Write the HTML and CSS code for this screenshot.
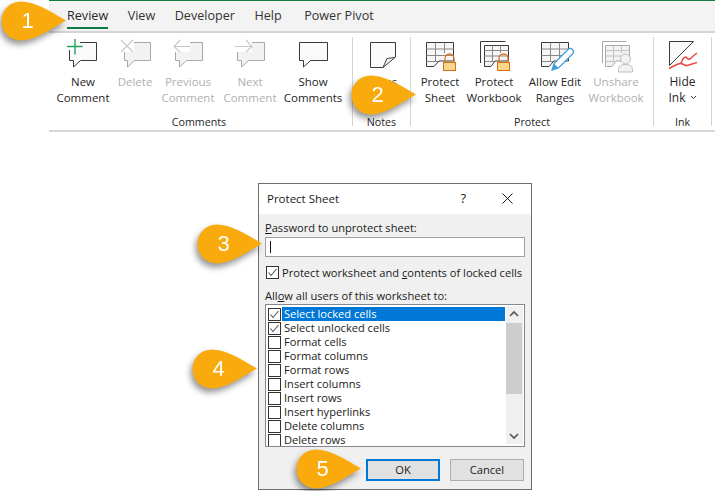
FILE: index.html
```html
<!DOCTYPE html>
<html lang="en">
<head>
<meta charset="utf-8">
<title>Protect Sheet</title>
<link rel="stylesheet" href="styles.css">
</head>
<body>
<header class="ribbon">
  <nav class="tabs">
    <span class="tab active">Review</span><span class="tab">View</span><span class="tab">Developer</span><span class="tab">Help</span><span class="tab">Power Pivot</span>
  </nav>
  <div class="groups">
    <section class="group g-comments">
      <div class="btns">
        <div class="btn w-new">
          <svg class="ico" viewBox="0 0 32 32"><path class="bub" d="M2.500 4.500H29.500V22.500H13.500L6.500 29V22.500H2.500Z"/><path class="cut" d="M0 0h13v12H0z"/><path class="plus" d="M0 8.500H15.500M8 1V16.500"/></svg>
          <span>New</span><span>Comment</span>
        </div>
        <div class="btn w-del off">
          <svg class="ico" viewBox="0 0 32 32"><path class="bub" d="M5.500 4.500H31.500V22.500H15.500L8.500 29V22.500H5.500Z"/><path class="cut" d="M0 0h15v14H0z"/><path class="gl" d="M2 2L14 14M14 2L2 14"/></svg>
          <span>Delete</span>
        </div>
        <div class="btn w-prev off">
          <svg class="ico" viewBox="0 0 32 32"><path class="bub" d="M3.500 4.500H30.500V22.500H14.500L7.500 29V22.500H3.500Z"/><path class="cut" d="M0 2h18v12H0z"/><path class="gl" d="M8 2L2 8.500L8 14M2 8.500H18"/></svg>
          <span>Previous</span><span>Comment</span>
        </div>
        <div class="btn w-next off">
          <svg class="ico" viewBox="0 0 32 32"><path class="bub" d="M3.500 4.500H30.500V22.500H14.500L7.500 29V22.500H3.500Z"/><path class="cut" d="M0 2h18v12H0z"/><path class="gl" d="M12 2L18 8.500L12 14M1 8.500H18"/></svg>
          <span>Next</span><span>Comment</span>
        </div>
        <div class="btn w-show">
          <svg class="ico" viewBox="0 0 32 32"><path class="bub" d="M2.500 4.500H30.500V22.500H13.500L6.500 29V22.500H2.500Z"/></svg>
          <span>Show</span><span>Comments</span>
        </div>
      </div>
      <div class="glabel glabel-comments">Comments</div>
    </section>
    <section class="group g-notes">
      <div class="btns">
        <div class="btn w-fill">
          <svg class="ico" viewBox="0 0 32 32"><path class="bub" d="M4.500 4.500H29.500V19L17 29.500H4.500Z"/><path class="ln" d="M29 19.500L21 20.500L17 29.500"/></svg>
          <span>Notes</span>
        </div>
      </div>
      <div class="glabel">Notes</div>
    </section>
    <section class="group g-protect">
      <div class="btns">
        <div class="btn w-sheet">
          <svg class="ico" viewBox="0 0 32 32"><path class="sheet" d="M2.500 4.500H29.500V23H15L10 28.500H2.500Z"/><path class="grid" d="M2.500 11H29.500M2.500 17.500H29.500M2.500 23.500H14M11.500 4.500V23M20.500 4.500V15"/><path class="shackle" d="M21 24V20.500a4.500 4.500 0 0 1 9 0V24"/><rect class="lock" x="19.500" y="24.500" width="12" height="8"/></svg>
          <span>Protect</span><span>Sheet</span>
        </div>
        <div class="btn w-book">
          <svg class="ico" viewBox="0 0 32 32"><path class="ln" d="M2.500 25V3.500H27.500"/><path class="sheet" d="M6.500 7.500H30.500V23H17L13 28.500H6.500Z"/><path class="grid" d="M6.500 12.500H30.500M6.500 18H30.500M6.500 23.500H16M14.500 7.500V23M22.500 7.500V15"/><path class="shackle" d="M21 24V20.500a4.500 4.500 0 0 1 9 0V24"/><rect class="lock" x="19.500" y="24.500" width="12" height="8"/></svg>
          <span>Protect</span><span>Workbook</span>
        </div>
        <div class="btn w-edit">
          <svg class="ico" viewBox="0 0 32 32"><path class="sheet" d="M2.500 4.500H29.500V23H15L10 28.500H2.500Z"/><path class="grid" d="M2.500 11H29.500M2.500 17.500H24M2.500 23.500H14M11.500 4.500V23M20.500 4.500V23"/><path class="pencil" d="M13 32L15 25.500L29 11.500a2.500 2.500 0 0 1 4.500 4.500L19.500 30Z"/><path class="nib" d="M13 32L15 25.500L19.500 30Z"/></svg>
          <span>Allow Edit</span><span>Ranges</span>
        </div>
        <div class="btn w-share off">
          <svg class="ico" viewBox="0 0 32 32"><path class="ln" d="M2.500 25V3.500H26.500"/><path class="sheet" d="M5.500 7.500H29.500V23H16L12 28.500H5.500Z"/><path class="grid" d="M5.500 12.500H29.500M5.500 18H21M5.500 23.500H16M13.500 7.500V23M21.500 7.500V15"/><circle class="head" cx="25.500" cy="21" r="5"/><path class="head" d="M18.500 34V31.500C18.500 28 21.500 26.500 25.500 26.500S32.500 28 32.500 31.500V34Z"/></svg>
          <span>Unshare</span><span>Workbook</span>
        </div>
      </div>
      <div class="glabel">Protect</div>
    </section>
    <section class="group g-ink">
      <div class="btns">
        <div class="btn w-fill ink">
          <svg class="ico" viewBox="0 0 32 32"><path class="bub" d="M2.500 3.500H26.500L2.500 27.500Z"/><path class="inkred" d="M2 30.500C7 28 11 25 14 25.500C17 26 18 28 20 27.500C23 27 26 25.500 30 24.500"/><path class="inkred" d="M14 25.500C15 22 17 19 19 19C21 21 21 22 23 21C25 19 27 17 30 15"/></svg>
          <span>Hide</span><span>Ink <svg class="chev" viewBox="0 0 7 5"><path d="M1 1L3.500 3.500L6 1"/></svg></span>
        </div>
      </div>
      <div class="glabel">Ink</div>
    </section>
  </div>
</header>

<main class="dialog">
  <div class="title">
    <span class="title-text">Protect Sheet</span>
    <span class="help">?</span>
    <svg class="close" viewBox="0 0 11 11"><path d="M.5 .5L10.500 10.500M10.500 .5L.5 10.500"/></svg>
  </div>
  <div class="body">
    <div class="lbl"><u>P</u>assword to unprotect sheet:</div>
    <div class="input"><i class="caret"></i></div>
    <div class="row-check">
      <span class="cb"><svg viewBox="0 0 11 11"><path d="M1.500 5.500L4 8.500L9.500 2"/></svg></span>
      <span>Protect worksheet and <u>c</u>ontents of locked cells</span>
    </div>
    <div class="lbl lbl-allow">All<u>o</u>w all users of this worksheet to:</div>
    <div class="list">
      <div class="items">
        <div class="item sel"><span class="cb"><svg viewBox="0 0 11 11"><path d="M1.500 5.500L4 8.500L9.500 2"/></svg></span><span class="txt">Select locked cells</span></div>
        <div class="item"><span class="cb"><svg viewBox="0 0 11 11"><path d="M1.500 5.500L4 8.500L9.500 2"/></svg></span><span class="txt">Select unlocked cells</span></div>
        <div class="item"><span class="cb"></span><span class="txt">Format cells</span></div>
        <div class="item"><span class="cb"></span><span class="txt">Format columns</span></div>
        <div class="item"><span class="cb"></span><span class="txt">Format rows</span></div>
        <div class="item"><span class="cb"></span><span class="txt">Insert columns</span></div>
        <div class="item"><span class="cb"></span><span class="txt">Insert rows</span></div>
        <div class="item"><span class="cb"></span><span class="txt">Insert hyperlinks</span></div>
        <div class="item"><span class="cb"></span><span class="txt">Delete columns</span></div>
        <div class="item"><span class="cb"></span><span class="txt">Delete rows</span></div>
      </div>
      <div class="scroll">
        <svg class="arr" viewBox="0 0 16 17"><path d="M4 10L8 6L12 10"/></svg>
        <div class="thumb"></div>
        <svg class="arr arr-down" viewBox="0 0 16 17"><path d="M4 7L8 11L12 7"/></svg>
      </div>
    </div>
    <div class="actions">
      <div class="dbtn primary">OK</div>
      <div class="dbtn">Cancel</div>
    </div>
  </div>
</main>

<div class="callout c1"><svg viewBox="0 0 66 40"><path d="M20 .5C33 .5 47 9 65 19.500C47 30 33 39.500 20 39.500C9 39.500 .5 31 .5 20S9 .5 20 .5Z"/></svg><span>1</span></div>
<div class="callout c2"><svg viewBox="0 0 66 40"><path d="M20 .5C33 .5 47 9 65 19.500C47 30 33 39.500 20 39.500C9 39.500 .5 31 .5 20S9 .5 20 .5Z"/></svg><span>2</span></div>
<div class="callout c3"><svg viewBox="0 0 66 40"><path d="M20 .5C33 .5 47 9 65 19.500C47 30 33 39.500 20 39.500C9 39.500 .5 31 .5 20S9 .5 20 .5Z"/></svg><span>3</span></div>
<div class="callout c4"><svg viewBox="0 0 66 40"><path d="M20 .5C33 .5 47 9 65 19.500C47 30 33 39.500 20 39.500C9 39.500 .5 31 .5 20S9 .5 20 .5Z"/></svg><span>4</span></div>
<div class="callout c5"><svg viewBox="0 0 66 40"><path d="M20 .5C33 .5 47 9 65 19.500C47 30 33 39.500 20 39.500C9 39.500 .5 31 .5 20S9 .5 20 .5Z"/></svg><span>5</span></div>
</body>
</html>
```
FILE: styles.css
```css
* { box-sizing: border-box; }
html, body { height: 100%; }
body {
  margin: 0;
  position: relative;
  overflow: hidden;
  background: #fff;
  color: #262626;
  font-family: "Open Sans", "Noto Sans", sans-serif;
  font-size: 11.5px;
}

/* Ribbon */
.ribbon {
  margin-left: 49px;
  height: 132px;
  border-top: 1px solid #107c41;
  border-bottom: 2px solid #d6d6d6;
  background: #fff;
}
.tabs {
  display: flex;
  height: 32px;
  padding-left: 18px;
  gap: 19.5px;
  background: #f3f3f3;
  border-bottom: 2px solid #d4d4d4;
  font-size: 12.6px;
}
.tab {
  height: 28px;
  line-height: 30px;
  color: #333;
}
.tab:last-child { margin-left: 3px; }
.tab.active {
  font-weight: 500;
  color: #262626;
  border-bottom: 2px solid #107c41;
}
.groups { display: flex; height: 97px; padding-top: 4px; }
.group {
  display: flex;
  flex-direction: column;
  justify-content: space-between;
  height: 89px;
  border-right: 1px solid #d4d4d4;
}
.g-comments { width: 304px; padding-left: 4px; }
.g-notes { width: 58px; }
.g-protect { width: 243px; }
.g-ink { width: 58px; }
.btns { display: flex; }
.btn {
  display: flex;
  flex-direction: column;
  align-items: center;
  padding-top: 1px;
  line-height: 16px;
  white-space: nowrap;
}
.btn > span { display: block; }
.off { color: #b0b0b0; }
.ico { display: block; width: 32px; height: 32px; margin-bottom: 4px; overflow: visible; flex: none; }
.glabel { text-align: center; line-height: 16px; margin-bottom: -4px; font-size: 10.7px; }
.glabel-comments { margin-right: 7px; }
.w-new { width: 60px; }
.w-del { width: 44px; }
.w-prev { width: 62px; }
.w-next { width: 62px; }
.w-show { width: 64px; }
.w-fill { width: 100%; }
.w-sheet { width: 58px; }
.w-book { width: 50px; }
.w-edit { width: 72px; }
.w-share { width: 50px; }
.ink { font-size: 12px; }
.bub { fill: #fafafa; stroke: #3a3a3a; stroke-width: 1; }
.off .bub { fill: #f2f2f2; stroke: #a8a8a8; }
.cut { fill: #fff; }
.plus { fill: none; stroke: #21a35e; stroke-width: 1.4; }
.gl { fill: none; stroke: #c8c8c8; stroke-width: 1.2; }
.ln { fill: none; stroke: #3a3a3a; stroke-width: 1; }
.off .ln { stroke: #a8a8a8; }
.sheet { fill: #f6f6f6; stroke: #3a3a3a; stroke-width: 1; }
.off .sheet { fill: #f2f2f2; stroke: #a8a8a8; }
.grid { fill: none; stroke: #8a8a8a; stroke-width: 1; }
.off .grid { stroke: #c4c4c4; }
.shackle { fill: none; stroke: #d9761b; stroke-width: 1.3; }
.lock { fill: #f8d78c; stroke: #d86e0e; stroke-width: 1; }
.pencil { fill: #fff; stroke: #3f9ddc; stroke-width: 1.2; }
.nib { fill: #3f9ddc; }
.head { fill: #f2f2f2; stroke: #bcbcbc; stroke-width: 1; }
.inkred { fill: none; stroke: #ee4444; stroke-width: 1.5; }
.chev { width: 7px; height: 5px; margin-left: 1px; vertical-align: 2px; }
.chev path { fill: none; stroke: #333; stroke-width: 1; }

/* Dialog */
.dialog {
  margin: 51px 0 0 258px;
  width: 274px;
  height: 307px;
  border: 1px solid #6f6f6f;
  display: flex;
  flex-direction: column;
  font-size: 11.1px;
  color: #1a1a1a;
}
.title {
  display: flex;
  align-items: center;
  height: 30px;
  flex: none;
  padding: 0 0 2px 8px;
  background: #fff;
  font-size: 11.5px;
}
.title-text { flex: 1; }
.help { margin-right: 36px; font-size: 13px; }
.close { width: 11px; height: 11px; margin-right: 18px; }
.close path { fill: none; stroke: #1a1a1a; stroke-width: 1; }
.body {
  flex: 1;
  background: #f0f0f0;
  padding: 6px 6px 0;
}
.lbl { line-height: 15px; }
.input {
  margin-top: 2px;
  height: 20px;
  width: 260px;
  background: #fff;
  border: 1px solid #a0a0a0;
  padding: 3px 4px;
}
.caret { display: block; width: 1px; height: 12px; background: #111; }
.row-check {
  display: flex;
  align-items: center;
  gap: 3px;
  margin: 8px 0 0 1px;
  height: 14px;
  white-space: nowrap;
}
.lbl-allow { margin-top: 9px; }
.cb {
  flex: none;
  display: block;
  width: 13px;
  height: 13px;
  background: #fff;
  border: 1px solid #333;
}
.cb svg { display: block; width: 11px; height: 11px; }
.cb path { fill: none; stroke: #555; stroke-width: 1.1; }
.list {
  display: flex;
  margin-top: 1px;
  width: 260px;
  height: 143px;
  background: #fff;
  border: 1px solid #828790;
  padding: 1px 1px 0 2px;
}
.items { width: 238px; overflow: hidden; padding-top: 1px; }
.item { display: flex; align-items: center; height: 14px; gap: 1px; white-space: nowrap; }
.txt { flex: 1; height: 14px; line-height: 14px; padding-left: 2px; }
.sel .txt { background: #0078d7; color: #fff; }
.scroll {
  width: 17px;
  height: 138px;
  margin-left: 1px;
  background: #f0f0f0;
  display: flex;
  flex-direction: column;
}
.arr { display: block; width: 16px; height: 17px; flex: none; }
.arr path { fill: none; stroke: #555; stroke-width: 1.6; }
.thumb { width: 16px; height: 71px; background: #cdcdcd; }
.arr-down { margin-top: auto; }
.actions {
  display: flex;
  justify-content: flex-end;
  gap: 10px;
  margin-top: 12px;
  width: 259px;
}
.dbtn {
  width: 74px;
  height: 22px;
  line-height: 20px;
  text-align: center;
  background: #e1e1e1;
  border: 1px solid #adadad;
}
.primary { border: 2px solid #0078d7; line-height: 18px; }

/* Callouts */
.callout {
  position: absolute;
  width: 66px;
  height: 40px;
  filter: drop-shadow(-2px 4px 3px rgba(0,0,0,.42));
}
.callout svg { display: block; width: 66px; height: 40px; }
.callout path { fill: #f9ab0e; }
.callout span {
  position: absolute;
  left: 0;
  top: 0;
  width: 53px;
  text-align: center;
  line-height: 40px;
  color: #fff;
  font-family: "Liberation Sans", sans-serif;
  font-size: 22px;
}
.c1 { left: 1px; top: 1px; }
.c2 { left: 351px; top: 75px; }
.c3 { left: 197px; top: 224px; }
.c4 { left: 192px; top: 349px; }
.c5 { left: 296px; top: 449px; }
```
